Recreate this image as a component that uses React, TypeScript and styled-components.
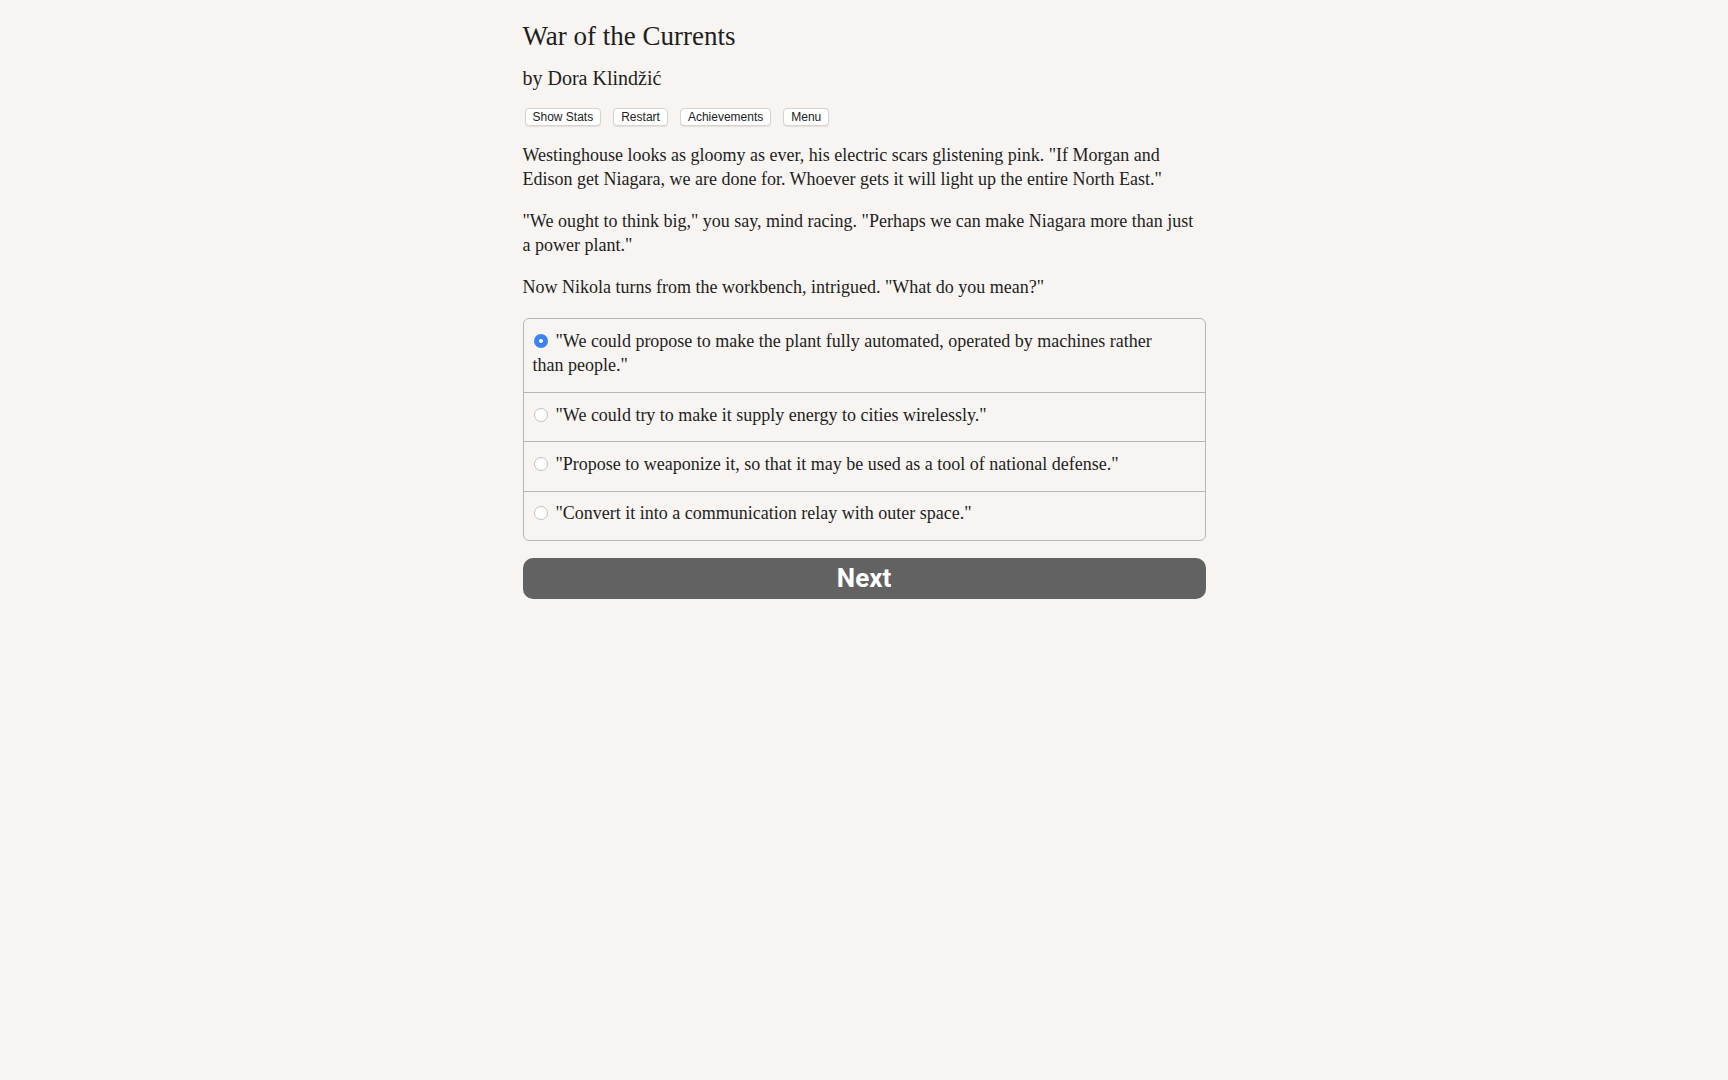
import React, { useState } from 'react';
import styled, { createGlobalStyle } from 'styled-components';

const GlobalStyle = createGlobalStyle`
	html, body {
		margin: 0;
		padding: 0;
		background: #f7f4f1;
	}
	body {
		font-family: 'Liberation Serif', 'Times New Roman', serif;
		color: #1e1e1e;
	}
`;

const Main = styled.div`
	max-width: 683px;
	margin: 0 auto;
	padding-top: 20px;
`;

const Title = styled.h1`
	margin: 0;
	font-size: 27px;
	font-weight: 400;
	line-height: 33px;
`;

const Byline = styled.h2`
	margin: 13px 0 0;
	font-size: 20px;
	font-weight: 400;
	line-height: 24px;
`;

const Toolbar = styled.div`
	display: flex;
	gap: 12px;
	margin: 18px 0 0 2px;
`;

const ToolButton = styled.button`
	font-family: 'Liberation Sans', Arial, sans-serif;
	font-size: 12px;
	color: #222;
	background: #fff;
	border: 1px solid #d6d3d0;
	border-radius: 4px;
	box-shadow: 0 1px 1px rgba(0, 0, 0, 0.08);
	height: 18px;
	padding: 0 7px;
	line-height: 16px;
	cursor: pointer;
`;

const Text = styled.div`
	margin-top: 17px;
	font-size: 18px;
	line-height: 24.3px;
	p {
		margin: 0 0 17.5px;
	}
	p:last-child {
		margin-bottom: 0;
	}
`;

const ChoiceList = styled.div`
	margin-top: 19px;
	border: 1px solid #b9b7b5;
	border-radius: 6px;
	overflow: hidden;
`;

const ChoiceRow = styled.label`
	display: block;
	padding: 9.5px 24px 14.5px 9px;
	font-size: 18px;
	line-height: 24.3px;
	cursor: pointer;
	& + & {
		border-top: 1px solid #b9b7b5;
	}
`;

const Radio = styled.span<{ $checked: boolean }>`
	display: inline-block;
	box-sizing: border-box;
	width: 14px;
	height: 14px;
	margin: 0 8px 0 1px;
	vertical-align: -1px;
	border-radius: 50%;
	background: ${(p) => (p.$checked ? '#3d82f0' : '#fff')};
	border: ${(p) => (p.$checked ? 'none' : '1px solid #c4c2c0')};
	position: relative;
	&::after {
		content: '';
		display: ${(p) => (p.$checked ? 'block' : 'none')};
		position: absolute;
		left: 5px;
		top: 5px;
		width: 4px;
		height: 4px;
		border-radius: 50%;
		background: #fff;
	}
`;

const NextButton = styled.button`
	display: block;
	width: 100%;
	margin-top: 17px;
	height: 41px;
	border: none;
	border-radius: 10px;
	background: #636262;
	color: #fff;
	font-family: Roboto, 'Liberation Sans', Arial, sans-serif;
	font-weight: 700;
	font-size: 26px;
	cursor: pointer;
`;

const choices = [
	'"We could propose to make the plant fully automated, operated by machines rather than people."',
	'"We could try to make it supply energy to cities wirelessly."',
	'"Propose to weaponize it, so that it may be used as a tool of national defense."',
	'"Convert it into a communication relay with outer space."',
];

export default function App() {
	const [selected, setSelected] = useState(0);
	return (
		<>
			<GlobalStyle />
			<Main>
				<Title>War of the Currents</Title>
				<Byline>by Dora Klindžić</Byline>
				<Toolbar>
					<ToolButton>Show Stats</ToolButton>
					<ToolButton>Restart</ToolButton>
					<ToolButton>Achievements</ToolButton>
					<ToolButton>Menu</ToolButton>
				</Toolbar>
				<Text>
					<p>
						Westinghouse looks as gloomy as ever, his electric scars glistening pink. "If Morgan and
						Edison get Niagara, we are done for. Whoever gets it will light up the entire North East."
					</p>
					<p>
						"We ought to think big," you say, mind racing. "Perhaps we can make Niagara more than just a
						power plant."
					</p>
					<p>Now Nikola turns from the workbench, intrigued. "What do you mean?"</p>
				</Text>
				<ChoiceList>
					{choices.map((c, i) => (
						<ChoiceRow key={i} onClick={() => setSelected(i)}>
							<Radio $checked={selected === i} />
							{c}
						</ChoiceRow>
					))}
				</ChoiceList>
				<NextButton>Next</NextButton>
			</Main>
		</>
	);
}
